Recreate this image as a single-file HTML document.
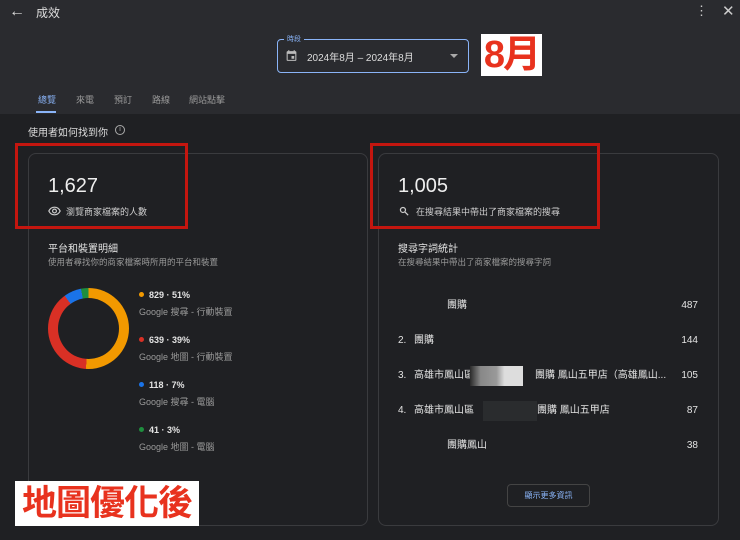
<!DOCTYPE html>
<html><head><meta charset="utf-8"><style>
*{box-sizing:border-box;margin:0;padding:0}
body{width:740px;height:540px;overflow:hidden;background:#1f2023;font-family:"Liberation Sans","Noto Sans CJK TC",sans-serif;color:#e3e3e3;position:relative}
.hdr{position:absolute;left:0;top:0;width:740px;height:114px;background:#2a2b2f}
.a{position:absolute}
.card{position:absolute;top:153px;height:373px;border:1px solid #3a3b3e;border-radius:8px;background:#1f2023}
.red{position:absolute;border:3px solid #c4160f}
.lg{font-size:9px;color:#9a9a9a}
.lv{font-size:9px;color:#e3e3e3;font-weight:bold}
.dot{display:inline-block;width:5px;height:5px;border-radius:50%;margin-right:5px;vertical-align:1px}
.row{position:absolute;left:398px;width:300px;height:14px;font-size:10px;line-height:14px;color:#e3e3e3;white-space:nowrap}
.row span{position:absolute;top:0}
</style></head><body>
<div class="hdr"></div>
<div class="a" style="left:9px;top:3px;font-size:16px;color:#ddd">←</div>
<div class="a" style="left:36px;top:4px;font-size:12px;color:#ddd">成效</div>
<div class="a" style="left:695px;top:3px;font-size:13px;color:#ccc">⋮</div>
<div class="a" style="left:722px;top:2px;font-size:15px;color:#ccc">✕</div>
<div class="a" style="left:277px;top:39px;width:192px;height:34px;border:1.5px solid #8ab4f8;border-radius:4px"></div>
<div class="a" style="left:284px;top:34px;background:#2a2b2f;padding:0 3px;font-size:7px;color:#8ab4f8">時段</div>
<svg class="a" style="left:285px;top:49px" width="13" height="13" viewBox="0 0 24 24"><path fill="#bbb" d="M19 4h-1V2h-2v2H8V2H6v2H5a2 2 0 0 0-2 2v14a2 2 0 0 0 2 2h14a2 2 0 0 0 2-2V6a2 2 0 0 0-2-2zm0 16H5V9h14v11zM12 13h5v5h-5z"/></svg>
<div class="a" style="left:307px;top:49px;font-size:10px;color:#ddd">2024年8月 – 2024年8月</div>
<div class="a" style="left:450px;top:54px;width:0;height:0;border-left:4px solid transparent;border-right:4px solid transparent;border-top:4px solid #aaa"></div>
<div class="a" style="left:481px;top:34px;width:61px;height:42px;background:#fff;color:#e8321e;font-size:38px;font-weight:bold;line-height:42px;text-align:center;letter-spacing:-2px">8月</div>
<div class="a" style="left:38px;top:93px;font-size:9px;color:#8ab4f8">總覽</div>
<div class="a" style="left:36px;top:111px;width:20px;height:2px;background:#8ab4f8"></div>
<div class="a" style="left:76px;top:93px;font-size:9px;color:#999">來電</div>
<div class="a" style="left:114px;top:93px;font-size:9px;color:#999">預訂</div>
<div class="a" style="left:152px;top:93px;font-size:9px;color:#999">路線</div>
<div class="a" style="left:189px;top:93px;font-size:9px;color:#999">網站點擊</div>
<div class="a" style="left:28px;top:124px;font-size:10px;color:#ddd">使用者如何找到你</div>
<div class="a" style="left:115px;top:125px;width:10px;height:10px;border:1px solid #aaa;border-radius:50%;font-size:7px;line-height:8px;text-align:center;color:#aaa">i</div>
<div class="card" style="left:28px;width:340px"></div>
<div class="card" style="left:378px;width:341px"></div>
<div class="a" style="left:48px;top:175px;font-size:20px;color:#eee">1,627</div>
<svg class="a" style="left:48px;top:206px" width="13" height="10" viewBox="0 0 24 16"><path fill="none" stroke="#ccc" stroke-width="2.2" d="M1.5 8C4 3 8 1 12 1s8 2 10.5 7C20 13 16 15 12 15S4 13 1.5 8z"/><circle cx="12" cy="8" r="3.5" fill="none" stroke="#ccc" stroke-width="2.2"/></svg>
<div class="a" style="left:66px;top:205px;font-size:9px;color:#ccc">瀏覽商家檔案的人數</div>
<div class="a" style="left:398px;top:175px;font-size:20px;color:#eee">1,005</div>
<svg class="a" style="left:399px;top:206px" width="10" height="10" viewBox="0 0 24 24"><circle cx="9.5" cy="9.5" r="6" fill="none" stroke="#ccc" stroke-width="3"/><path d="M14 14l8 8" stroke="#ccc" stroke-width="3"/></svg>
<div class="a" style="left:416px;top:205px;font-size:9px;color:#ccc">在搜尋結果中帶出了商家檔案的搜尋</div>
<div class="red" style="left:15px;top:143px;width:173px;height:86px"></div>
<div class="red" style="left:370px;top:143px;width:230px;height:86px"></div>
<div class="a" style="left:48px;top:240px;font-size:10px;color:#e3e3e3">平台和裝置明細</div>
<div class="a" style="left:48px;top:256px;font-size:8.5px;color:#9a9a9a">使用者尋找你的商家檔案時所用的平台和裝置</div>
<div class="a" style="left:48px;top:288px;width:81px;height:81px;border-radius:50%;background:conic-gradient(#f29900 0 51%,#d93025 51% 90%,#1a73e8 90% 97%,#1e8e3e 97% 100%)"></div>
<div class="a" style="left:58px;top:298px;width:61px;height:61px;border-radius:50%;background:#1f2023"></div>
<div class="a lv" style="left:139px;top:290px"><span class="dot" style="background:#f29900"></span>829 · 51%</div>
<div class="a lg" style="left:139px;top:305px">Google 搜尋 - 行動裝置</div>
<div class="a lv" style="left:139px;top:335px"><span class="dot" style="background:#d93025"></span>639 · 39%</div>
<div class="a lg" style="left:139px;top:350px">Google 地圖 - 行動裝置</div>
<div class="a lv" style="left:139px;top:380px"><span class="dot" style="background:#1a73e8"></span>118 · 7%</div>
<div class="a lg" style="left:139px;top:395px">Google 搜尋 - 電腦</div>
<div class="a lv" style="left:139px;top:425px"><span class="dot" style="background:#1e8e3e"></span>41 · 3%</div>
<div class="a lg" style="left:139px;top:440px">Google 地圖 - 電腦</div>
<div class="a" style="left:15px;top:481px;width:184px;height:45px;background:#fff;color:#e8321e;font-size:35px;font-weight:bold;line-height:45px;text-align:center;letter-spacing:-1px">地圖優化後</div>
<div class="a" style="left:398px;top:240px;font-size:10px;color:#e3e3e3">搜尋字詞統計</div>
<div class="a" style="left:398px;top:256px;font-size:8.5px;color:#9a9a9a">在搜尋結果中帶出了商家檔案的搜尋字詞</div>

<div class="row" style="top:299px"><span style="left:49px">團購</span><span style="right:0">487</span></div>
<div class="row" style="top:334px"><span style="left:0">2.</span><span style="left:16px">團購</span><span style="right:0">144</span></div>
<div class="row" style="top:369px"><span style="left:0">3.</span><span style="left:16px">高雄市鳳山區</span><span style="left:72px;top:-3px;width:53px;height:20px;background:linear-gradient(90deg,#2a2a2a,#888 20%,#999 50%,#ddd 65%,#ddd)"></span><span style="left:137px">團購 鳳山五甲店（高雄鳳山...</span><span style="right:0">105</span></div>
<div class="row" style="top:404px"><span style="left:0">4.</span><span style="left:16px">高雄市鳳山區</span><span style="left:85px;top:-3px;width:54px;height:20px;background:#2a2c2e"></span><span style="left:139px">團購 鳳山五甲店</span><span style="right:0">87</span></div>
<div class="row" style="top:439px"><span style="left:49px">團購鳳山</span><span style="right:0">38</span></div>
<div class="a" style="left:507px;top:484px;width:83px;height:23px;border:1px solid #444;border-radius:4px;font-size:8px;color:#8ab4f8;text-align:center;line-height:21px">顯示更多資訊</div>
</body></html>
